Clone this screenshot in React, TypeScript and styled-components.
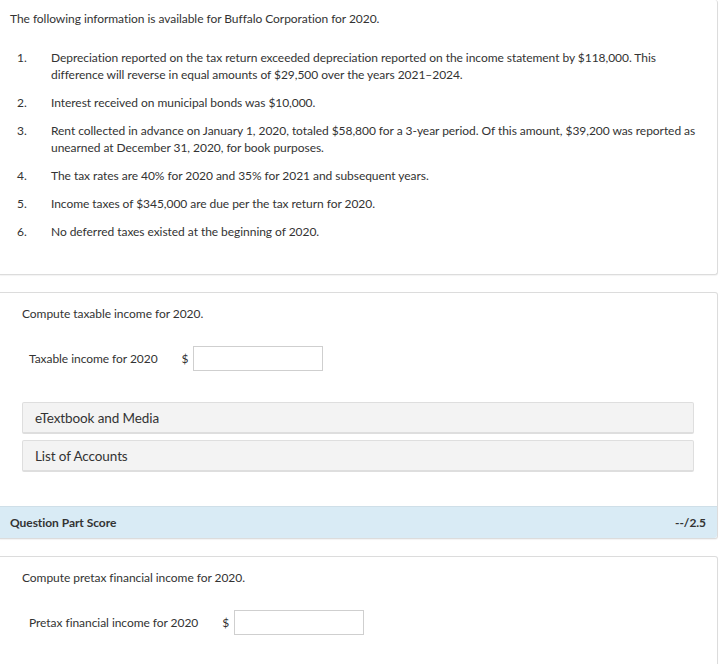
import styled, { createGlobalStyle } from "styled-components";

const GlobalStyle = createGlobalStyle`
	body {
		margin: 0;
		background: #fff;
		font-family: Lato, "Open Sans", sans-serif;
		font-size: 12px;
		letter-spacing: -0.05px;
		color: #333;
	}
`;

const Page = styled.div`
	width: 718px;
	padding-bottom: 20px;
`;

const Card = styled.section<{ $first?: boolean }>`
	border: 1px solid #dcdcdc;
	border-left: 0;
	border-top-width: ${(p) => (p.$first ? 0 : "1px")};
	border-radius: 0 3px 3px 0;
	box-shadow: 0 1px 1px rgba(0, 0, 0, 0.05);
	margin-bottom: 17px;
	background: #fff;
`;

const CardBody = styled.div<{ $pad: string }>`
	padding: ${(p) => p.$pad};
	line-height: 17px;
`;

const Intro = styled.p`
	margin: 0 0 22px;
`;

const List = styled.ol`
	list-style: none;
	margin: 0;
	padding: 0 0 0 7px;
	display: flex;
	flex-direction: column;
	gap: 11px;
`;

const Item = styled.li`
	display: grid;
	grid-template-columns: 34px 1fr;
`;

const Prompt = styled.p`
	margin: 0 0 24px;
`;

const AnswerRow = styled.div`
	display: flex;
	align-items: center;
	padding-left: 7px;
`;

const AnswerLabel = styled.span`
	margin-right: 24px;
`;

const Dollar = styled.span`
	margin-right: 5px;
`;

const AnswerInput = styled.input`
	width: 130px;
	height: 25px;
	box-sizing: border-box;
	border: 1px solid #cfcfcf;
	margin: 0;
	padding: 0 4px;
	font: inherit;
`;

const Links = styled.div`
	display: flex;
	flex-direction: column;
	gap: 6px;
	margin: 31px 23px 0 0;
`;

const LinkButton = styled.button`
	display: block;
	width: 100%;
	height: 32px;
	box-sizing: border-box;
	text-align: left;
	padding: 0 12px;
	background: #f3f3f3;
	border: 1px solid #dedede;
	border-bottom-width: 2px;
	border-radius: 2px;
	font-family: Lato, "Open Sans", sans-serif;
	font-size: 13.5px;
	letter-spacing: -0.1px;
	color: #333;
	cursor: pointer;
`;

const ScoreBar = styled.div`
	display: flex;
	justify-content: space-between;
	align-items: center;
	height: 31px;
	padding: 0 11px 0 10px;
	background: #d9ebf5;
	border-top: 1px solid #cfdfe8;
	border-radius: 0 0 3px 0;
	font-weight: 700;
	color: #333;
`;

const facts = [
	"Depreciation reported on the tax return exceeded depreciation reported on the income statement by $118,000. This difference will reverse in equal amounts of $29,500 over the years 2021\u20132024.",
	"Interest received on municipal bonds was $10,000.",
	"Rent collected in advance on January 1, 2020, totaled $58,800 for a 3-year period. Of this amount, $39,200 was reported as unearned at December 31, 2020, for book purposes.",
	"The tax rates are 40% for 2020 and 35% for 2021 and subsequent years.",
	"Income taxes of $345,000 are due per the tax return for 2020.",
	"No deferred taxes existed at the beginning of 2020.",
];

export default function App() {
	return (
		<Page>
			<GlobalStyle />
			<Card $first>
				<CardBody $pad="10px 10px 34px">
					<Intro>
						The following information is available for Buffalo Corporation for
						2020.
					</Intro>
					<List>
						{facts.map((text, i) => (
							<Item key={i}>
								<span>{i + 1}.</span>
								<span>{text}</span>
							</Item>
						))}
					</List>
				</CardBody>
			</Card>

			<Card>
				<CardBody $pad="12px 0 34px 22px">
					<Prompt>Compute taxable income for 2020.</Prompt>
					<AnswerRow>
						<AnswerLabel>Taxable income for 2020</AnswerLabel>
						<Dollar>$</Dollar>
						<AnswerInput type="text" />
					</AnswerRow>
					<Links>
						<LinkButton>eTextbook and Media</LinkButton>
						<LinkButton>List of Accounts</LinkButton>
					</Links>
				</CardBody>
				<ScoreBar>
					<span>Question Part Score</span>
					<span>--/2.5</span>
				</ScoreBar>
			</Card>

			<Card>
				<CardBody $pad="12px 0 40px 22px">
					<Prompt>Compute pretax financial income for 2020.</Prompt>
					<AnswerRow>
						<AnswerLabel>Pretax financial income for 2020</AnswerLabel>
						<Dollar>$</Dollar>
						<AnswerInput type="text" />
					</AnswerRow>
				</CardBody>
			</Card>
		</Page>
	);
}
